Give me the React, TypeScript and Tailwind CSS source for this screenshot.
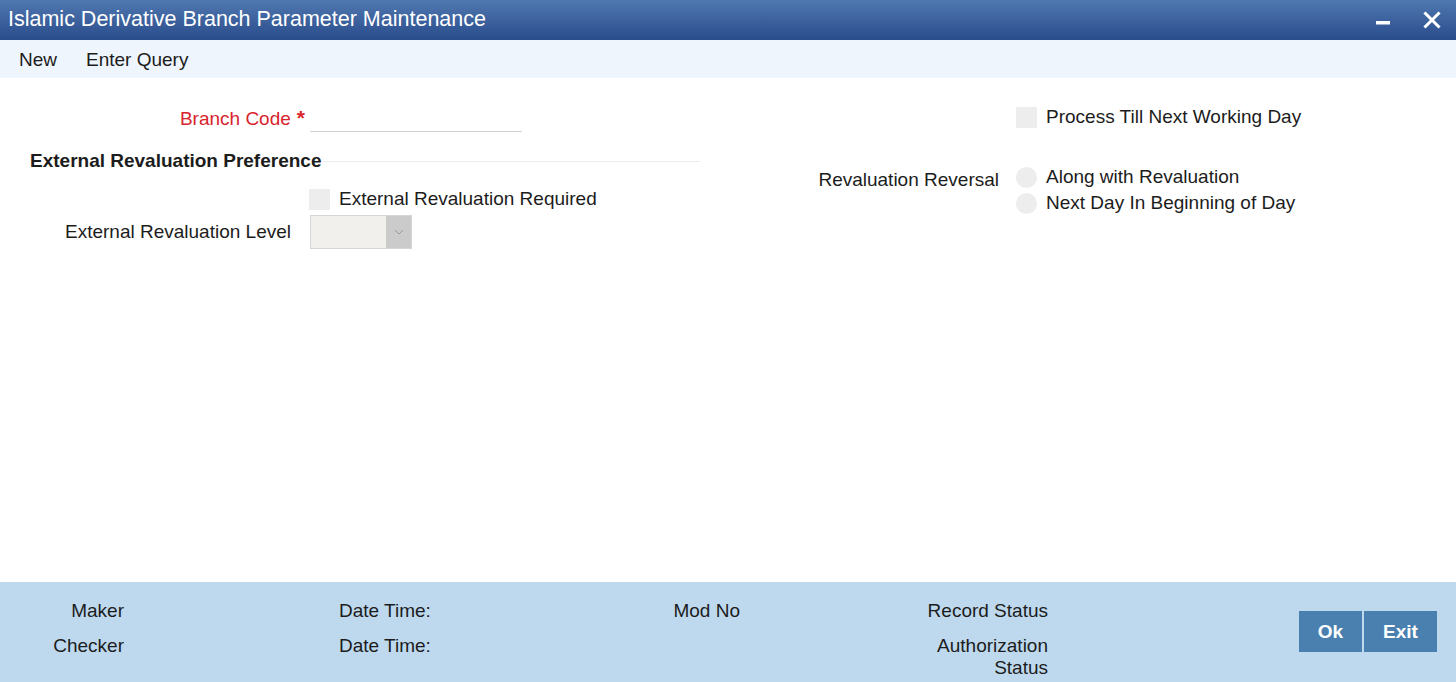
import React from 'react';

const font = { fontFamily: '"Liberation Sans", Arial, sans-serif' };

function CheckBox() {
  return <span className="inline-block w-[21px] h-[21px] bg-[#ededed] shrink-0" />;
}

function Radio() {
  return <span className="inline-block w-[21px] h-[21px] rounded-full bg-[#ededed] shrink-0" />;
}

export default function App() {
  return (
    <div style={font} className="w-[1456px] h-[682px] flex flex-col bg-white text-[19px] text-[#1c1c1c] overflow-hidden">
      {/* Title bar */}
      <div className="h-[40px] shrink-0 flex items-center bg-gradient-to-b from-[#5078b0] to-[#2a4c8b] text-white">
        <div className="pl-[8px] text-[21.5px] leading-none">Islamic Derivative Branch Parameter Maintenance</div>
        <div className="ml-auto flex items-center">
          <svg width="16" height="16" viewBox="0 0 16 16" className="mr-[32px] mt-[4px]">
            <rect x="1" y="7" width="14" height="3.5" fill="white" />
          </svg>
          <svg width="18" height="18" viewBox="0 0 18 18" className="mr-[15px]">
            <path d="M2.5 2.5 L15.5 15.5 M15.5 2.5 L2.5 15.5" stroke="white" strokeWidth="3" strokeLinecap="square" />
          </svg>
        </div>
      </div>

      {/* Toolbar */}
      <div className="h-[38px] shrink-0 flex items-center bg-[#eef5fd] pl-[19px] gap-[29px] pt-[3px]">
        <span>New</span>
        <span>Enter Query</span>
      </div>

      {/* Body */}
      <div className="flex-1 flex">
        <div className="w-[720px] shrink-0 flex flex-col">
          <div className="mt-[28px] h-[26px] flex items-center">
            <div className="w-[310px] flex justify-end items-center text-[#d9232d] pt-[1px]">
              <span>Branch Code</span>
              <span className="ml-[6px] mr-[5px] text-[21px] font-bold leading-none -mt-[5px]">*</span>
            </div>
            <div className="w-[212px] h-[26px] border-b border-[#d0d0d0]" />
          </div>

          <div className="mt-[17px] h-[24px] flex items-center pl-[30px] pr-[20px]">
            <span className="font-bold text-[19px]">External Revaluation Preference</span>
            <div className="flex-1 h-px bg-[#ececec] ml-[2px]" />
          </div>

          <div className="mt-[15px] h-[22px] flex items-center pl-[309px]">
            <CheckBox />
            <span className="ml-[9px]">External Revaluation Required</span>
          </div>

          <div className="mt-[5px] h-[34px] flex items-center">
            <div className="w-[291px] text-right">External Revaluation Level</div>
            <div className="ml-[19px] w-[102px] h-[34px] flex border border-[#d6d6d6] bg-[#f1f0ec]">
              <div className="flex-1" />
              <div className="w-[25px] bg-[#cbcbcb] flex items-center justify-center">
                <svg width="10" height="6" viewBox="0 0 10 6">
                  <path d="M1 1 L5 5 L9 1" fill="none" stroke="#9a9a9a" strokeWidth="1" />
                </svg>
              </div>
            </div>
          </div>
        </div>

        <div className="flex-1 flex flex-col">
          <div className="mt-[28px] h-[22px] flex items-center pl-[296px]">
            <CheckBox />
            <span className="ml-[9px] pt-[1px]">Process Till Next Working Day</span>
          </div>

          <div className="mt-[36px] flex">
            <div className="w-[279px] text-right h-[26px] leading-[26px] mt-[3px]">Revaluation Reversal</div>
            <div className="ml-[17px] flex flex-col">
              <div className="h-[26px] flex items-center">
                <Radio />
                <span className="ml-[9px] pt-[1px]">Along with Revaluation</span>
              </div>
              <div className="h-[26px] flex items-center">
                <Radio />
                <span className="ml-[9px] pt-[1px]">Next Day In Beginning of Day</span>
              </div>
            </div>
          </div>
        </div>
      </div>

      {/* Footer */}
      <div className="h-[100px] shrink-0 bg-[#bed9ee] flex pt-[18px] text-[19px] leading-[22px]">
        <div className="w-[124px] text-right flex flex-col gap-[13px]">
          <span>Maker</span>
          <span>Checker</span>
        </div>
        <div className="ml-[215px] w-[200px] flex flex-col gap-[13px]">
          <span>Date Time:</span>
          <span>Date Time:</span>
        </div>
        <div className="w-[201px] text-right">
          <span>Mod No</span>
        </div>
        <div className="w-[308px] text-right flex flex-col gap-[13px]">
          <span>Record Status</span>
          <span>Authorization<br />Status</span>
        </div>
        <div className="ml-auto mr-[19px] mt-[11px] self-start flex gap-[2px] text-white font-bold text-[19px]">
          <button className="w-[63px] h-[41px] bg-[#4a80b0]">Ok</button>
          <button className="w-[73px] h-[41px] bg-[#4a80b0]">Exit</button>
        </div>
      </div>
    </div>
  );
}
